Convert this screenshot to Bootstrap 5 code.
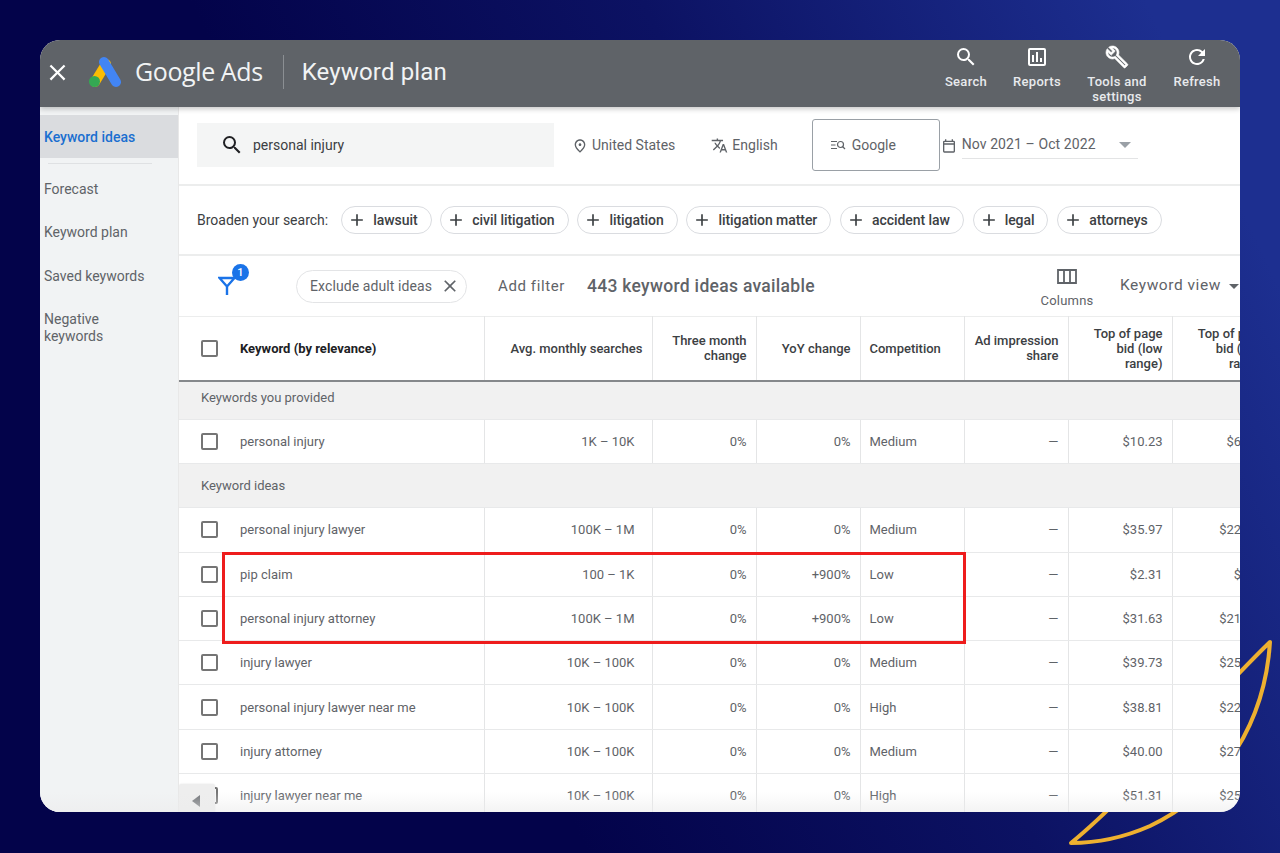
<!DOCTYPE html>
<html lang="en">
<head>
<meta charset="utf-8">
<title>Keyword plan</title>
<link rel="stylesheet" href="https://cdn.jsdelivr.net/npm/bootstrap@5.3.0/dist/css/bootstrap.min.css">
<style>
html,body{height:853px;overflow:hidden}
body{font-family:Roboto,"Liberation Sans",sans-serif;color:#5f6368;background:linear-gradient(65deg,#03034a 35%,#0c1263 62%,#1d2f90 92%);padding:40px}
.leaf{position:absolute;left:1060px;top:630px}
.frame{position:relative;width:1200px;height:772px;border-radius:20px;overflow:hidden;background:#fff}
.frame::after{content:"";position:absolute;left:0;right:0;bottom:0;height:20px;background:linear-gradient(rgba(240,240,240,0),rgba(236,236,236,.6));pointer-events:none;z-index:3}
.topbar{height:67px;background:#5f6368;color:#fff;box-shadow:0 2px 5px rgba(0,0,0,.22);position:relative;z-index:2;flex:none}
.brandwrap{margin-bottom:4px}
.close-x{margin:2px 17px 0 4px}
.brand{font-family:"Open Sans","Noto Sans",sans-serif;font-size:25px;letter-spacing:-.4px;color:#f1f3f4;margin-left:13px}
.vsep{width:1px;height:34px;background:#8b8f93;margin:0 18px 0 20px}
.pagename{font-size:24px;color:#f1f3f4;letter-spacing:.15px}
.tool{font-size:13px;line-height:15px;font-weight:500;letter-spacing:.3px;color:#e8eaed;text-align:center;width:80px;height:67px;padding-top:5px}
.tool.search{width:62px}
.tool svg{display:block;margin:0 auto 5px;height:24px}
.tool .wrench{stroke:#fff;stroke-width:.6px}
.tools-end{padding-right:3px}
.side{width:139px;flex:none;background:#f1f3f4;border-right:1.5px solid #e8e8e8;padding-top:8px;font-size:14px;line-height:17px}
.side .active-item{height:43px;background:#dadcdf;color:#1a6fd0;font-weight:500;padding:14px 0 0 4px}
.side hr{margin:5px 26px 0 8px;border:0;border-top:1px solid #dfe1e3;opacity:1}
.side a{display:block;color:#5f6368;text-decoration:none;padding-left:4px}
.side a.f{margin-top:17px}
.side a.n{margin-top:26.300px}
.main{min-width:0;flex:1;position:relative;overflow:hidden}
.searchrow{height:79px;border-bottom:2px solid #eceded;font-size:14px;padding-left:18px}
.sbox{width:357px;height:44px;background:#f4f5f5;color:#3c4043;padding-left:23px;margin-top:-1px}
.sbox span{margin-left:9px}
.loc{margin-left:18px}
.lang{margin-left:36px}
.google{width:128px;height:52px;border:1.5px solid #9aa0a6;border-radius:3px;padding-left:18px;margin:-1px 0 0 34px}
.google svg{margin-right:6px}
.date{margin-left:1px}
.date .val{width:176px;margin-left:5px;height:28px;border-bottom:1px solid #e3e4e5;letter-spacing:.1px;margin-top:-1px}
.tri{width:0;height:0;border-left:6px solid transparent;border-right:6px solid transparent;border-top:6px solid #9aa0a6}
.tri.date-tri{margin-right:7px}
.chiprow{height:70px;border-bottom:2px solid #eceded;padding-left:18px;font-size:14px;color:#3c4043}
.chiprow .lbl{margin-right:13px}
.chip{height:28px;border:1.5px solid #dadce0;border-radius:14px;font-weight:500;color:#3c4043;padding:0 13px 0 5px;margin-right:8.800px;background:#fff;letter-spacing:-.06px}
.chip svg{margin-right:6px}
.filterrow{height:60px;padding-left:39px;position:relative}
.badge-n{position:absolute;left:53px;top:8px;width:17px;height:17px;border-radius:50%;background:#1a73e8;color:#fff;font-size:11px;line-height:17px;text-align:center;font-weight:500}
.xchip{width:171px;height:33px;border:1.5px solid #e3e4e6;border-radius:17px;font-size:14px;padding-left:13px;margin:0 31px 0 60px;letter-spacing:.1px}
.xchip svg{margin-left:8px}
.addf{font-size:15px;letter-spacing:.6px;margin-right:22px}
.count{font-size:17.500px;font-weight:500;letter-spacing:.3px}
.cols{width:70px;font-size:13px;margin-left:auto;margin-right:18px;letter-spacing:.2px;padding-top:5px;line-height:15px;text-align:center}
.cols svg{display:block;margin:0 auto 9px}
.kview{font-size:15.500px;letter-spacing:.55px;width:120px;flex:none}
.kview .tri{border-top-color:#5f6368;border-left-width:5px;border-right-width:5px;border-top-width:5px;margin-left:8px}
.tbl-wrap{position:relative;overflow:hidden;width:1061px}
table.kw{table-layout:fixed;width:1097px;border-collapse:collapse;font-size:13px;margin:0;color:#5f6368}
table.kw th,table.kw td{border-right:1.5px solid #e4e5e6;border-bottom:1.5px solid #e8e9ea;padding:0 9px;text-align:right;line-height:15px;font-weight:400}
table.kw thead tr{height:64px}
table.kw thead th{border-top:1.5px solid #eceded;border-bottom:2.5px solid #85888b;color:#3c4043;font-weight:500}
table.kw tbody tr{height:44.300px}
table.kw tr.grp{height:38.500px;background:#f1f1f1}
table.kw tr.grp td{padding-bottom:6px}
table.kw tr.grp.two{height:44.500px}
table.kw tr.grp.two td{padding-bottom:0}
table.kw tr.grp td{text-align:left;padding-left:22px;border-right:0}
table.kw .k{text-align:left;padding-left:61px;position:relative}
table.kw thead .k{color:#202124;font-weight:700}
table.kw td.v{padding-right:17px}
table.kw .c{text-align:left}
.k .form-check-input{position:absolute;left:22px;top:50%;width:17px;height:17px;margin:-8.500px 0 0;border:2px solid #757575;border-radius:2px;background:#fff}
.redbox{position:absolute;left:43px;top:236px;width:744px;height:92px;border:3px solid #ee1c1c;pointer-events:none}
.scroll-left{position:absolute;left:0;bottom:0;width:36px;height:28px;background:#eeeeee;border-radius:3px 3px 0 0;box-shadow:0 0 2px rgba(0,0,0,.12);padding:11px 0 0 13px;z-index:2}
.scroll-left i{display:block;width:0;height:0;border-top:6px solid transparent;border-bottom:6px solid transparent;border-right:8px solid #6e7175}
.content{height:705px}
</style>
</head>
<body>
<svg class="leaf" width="220" height="223" viewBox="1060 630 220 223" aria-hidden="true"><path d="M1270 642C1265 720 1225 790 1150 826C1125 837 1098 843 1071 843C1130 795 1205 705 1270 642Z" fill="none" stroke="#eeb030" stroke-width="4" stroke-linejoin="round"/></svg>

<svg width="0" height="0" class="position-absolute">
 <symbol id="i-search" viewBox="0 0 24 24"><path d="M15.500 14h-.79l-.28-.27A6.471 6.471 0 0 0 16 9.500 6.500 6.500 0 1 0 9.500 16c1.610 0 3.090-.59 4.230-1.570l.27.28v.79l5 4.990L20.490 19l-4.990-5zm-6 0C7.010 14 5 11.990 5 9.500S7.010 5 9.500 5 14 7.010 14 9.500 11.990 14 9.500 14z"/></symbol>
 <symbol id="i-plus" viewBox="0 0 24 24"><path d="M19 13h-6v6h-2v-6H5v-2h6V5h2v6h6v2z"/></symbol>
 <symbol id="i-x" viewBox="0 0 24 24"><path d="M19 6.410 17.590 5 12 10.590 6.410 5 5 6.410 10.590 12 5 17.590 6.410 19 12 13.410 17.590 19 19 17.590 13.410 12z"/></symbol>
</svg>

<div class="frame d-flex flex-column">
 <header class="topbar d-flex align-items-center">
  <div class="d-flex align-items-center brandwrap">
   <svg class="close-x" width="27" height="27" fill="#fff" aria-hidden="true"><use href="#i-x"/></svg>
   <svg width="34" height="32" viewBox="0 0 34 32" aria-hidden="true"><path d="M18 8 7 26" stroke="#fbbc04" stroke-width="10" stroke-linecap="round" fill="none"/><path d="M16 6l12 20" stroke="#4285f4" stroke-width="10" stroke-linecap="round" fill="none"/><circle cx="6.500" cy="25.500" r="5.500" fill="#34a853"/></svg>
   <span class="brand">Google Ads</span>
   <span class="vsep"></span>
   <span class="pagename">Keyword plan</span>
  </div>
  <nav class="d-flex ms-auto tools-end">
   <div class="tool search"><svg width="24" height="24" fill="#fff" aria-hidden="true"><use href="#i-search"/></svg>Search</div>
   <div class="tool"><svg width="24" height="24" viewBox="0 0 24 24" fill="#fff" aria-hidden="true"><path d="M19 3H5a2 2 0 0 0-2 2v14a2 2 0 0 0 2 2h14a2 2 0 0 0 2-2V5a2 2 0 0 0-2-2zm0 16H5V5h14v14zM7 10h2v7H7zm4-3h2v10h-2zm4 6h2v4h-2z"/></svg>Reports</div>
   <div class="tool"><svg class="wrench" width="24" height="24" viewBox="0 0 24 24" fill="#fff" aria-hidden="true"><path d="M22.610 18.990l-9.080-9.080c.93-2.340.45-5.100-1.440-7C9.790.61 6.210.4 3.660 2.250L7.500 6.100 6.080 7.510 2.250 3.690C.39 6.230.6 9.820 2.900 12.110c1.860 1.860 4.570 2.350 6.880 1.480l9.110 9.110c.39.39 1.020.39 1.410 0l2.300-2.300c.4-.38.4-1.010.01-1.410zm-3 1.600l-9.460-9.460c-.61.45-1.290.72-2 .82-1.360.2-2.790-.21-3.830-1.250C3.370 9.760 2.930 8.500 3 7.260l3.090 3.090 4.240-4.240-3.090-3.090c1.240-.07 2.490.37 3.440 1.310 1.080 1.080 1.490 2.570 1.240 3.960-.12.71-.42 1.370-.88 1.960l9.450 9.450-.88.89z"/></svg>Tools and settings</div>
   <div class="tool"><svg width="24" height="24" viewBox="0 0 24 24" fill="#fff" aria-hidden="true"><path d="M17.650 6.350A7.958 7.958 0 0 0 12 4c-4.420 0-7.990 3.580-7.990 8s3.570 8 7.990 8c3.730 0 6.840-2.550 7.730-6h-2.080A5.990 5.990 0 0 1 12 18c-3.310 0-6-2.690-6-6s2.690-6 6-6c1.660 0 3.140.69 4.220 1.780L13 11h7V4l-2.350 2.350z"/></svg>Refresh</div>
  </nav>
 </header>
 <div class="d-flex content">
  <aside class="side">
   <div class="active-item">Keyword ideas</div>
   <hr>
   <a class="f" href="#">Forecast</a>
   <a class="n" href="#">Keyword plan</a>
   <a class="n" href="#">Saved keywords</a>
   <a class="n" href="#">Negative<br>keywords</a>
  </aside>
  <main class="main">
   <div class="searchrow d-flex align-items-center">
    <div class="sbox d-flex align-items-center"><svg width="24" height="24" fill="#202124" aria-hidden="true"><use href="#i-search"/></svg><span>personal injury</span></div>
    <div class="loc d-flex align-items-center"><svg width="16" height="16" viewBox="0 0 24 24" fill="#5f6368" class="me-1" aria-hidden="true"><path d="M12 12c-1.100 0-2-.9-2-2s.9-2 2-2 2 .9 2 2-.9 2-2 2zm6-1.800C18 6.570 15.350 4 12 4s-6 2.570-6 6.200c0 2.340 1.950 5.440 6 9.140 4.050-3.700 6-6.800 6-9.140zM12 2c4.200 0 8 3.220 8 8.200 0 3.320-2.670 7.250-8 11.800-5.330-4.550-8-8.480-8-11.800C4 5.220 7.800 2 12 2z"/></svg>United States</div>
    <div class="d-flex align-items-center lang"><svg width="17" height="17" viewBox="0 0 24 24" fill="#5f6368" class="me-1" aria-hidden="true"><path d="M12.870 15.070l-2.540-2.510.03-.03c1.740-1.940 2.980-4.170 3.710-6.530H17V4h-7V2H8v2H1v1.990h11.170C11.500 7.920 10.440 9.750 9 11.350 8.070 10.320 7.300 9.190 6.690 8h-2c.73 1.630 1.730 3.170 2.980 4.560l-5.090 5.020L4 19l5-5 3.110 3.110.76-2.040zM18.500 10h-2L12 22h2l1.120-3h4.750L21 22h2l-4.500-12zm-2.620 7l1.620-4.330L19.120 17h-3.240z"/></svg>English</div>
    <div class="google d-flex align-items-center"><svg width="15" height="10" viewBox="0 0 15 10" fill="none" stroke="#5f6368" stroke-width="1.200" aria-hidden="true"><path d="M0 1.500h6M0 5h4.500M0 8.500h6"/><circle cx="9.500" cy="4.500" r="3"/><path d="m11.500 6.500 2.500 2.500"/></svg>Google</div>
    <div class="date d-flex align-items-center"><svg width="16" height="16" viewBox="0 0 24 24" fill="#5f6368" aria-hidden="true"><path d="M19 4h-1V2h-2v2H8V2H6v2H5a2 2 0 0 0-2 2v14a2 2 0 0 0 2 2h14a2 2 0 0 0 2-2V6a2 2 0 0 0-2-2zm0 16H5V10h14v10zm0-12H5V6h14v2z"/></svg><div class="val d-flex justify-content-between align-items-center"><span>Nov 2021 – Oct 2022</span><span class="tri date-tri"></span></div></div>
   </div>
   <div class="chiprow d-flex align-items-center">
    <span class="lbl">Broaden your search:</span>
    <span class="chip d-flex align-items-center"><svg width="20" height="20" fill="#3c4043" aria-hidden="true"><use href="#i-plus"/></svg>lawsuit</span>
    <span class="chip d-flex align-items-center"><svg width="20" height="20" fill="#3c4043" aria-hidden="true"><use href="#i-plus"/></svg>civil litigation</span>
    <span class="chip d-flex align-items-center"><svg width="20" height="20" fill="#3c4043" aria-hidden="true"><use href="#i-plus"/></svg>litigation</span>
    <span class="chip d-flex align-items-center"><svg width="20" height="20" fill="#3c4043" aria-hidden="true"><use href="#i-plus"/></svg>litigation matter</span>
    <span class="chip d-flex align-items-center"><svg width="20" height="20" fill="#3c4043" aria-hidden="true"><use href="#i-plus"/></svg>accident law</span>
    <span class="chip d-flex align-items-center"><svg width="20" height="20" fill="#3c4043" aria-hidden="true"><use href="#i-plus"/></svg>legal</span>
    <span class="chip d-flex align-items-center"><svg width="20" height="20" fill="#3c4043" aria-hidden="true"><use href="#i-plus"/></svg>attorneys</span>
   </div>
   <div class="filterrow d-flex align-items-center">
    <svg width="18" height="20" viewBox="0 0 18 20" fill="none" stroke="#1a73e8" stroke-width="2.400" aria-hidden="true"><path d="M1.500 2h15L9 10.500zM9 9v10"/></svg>
    <span class="badge-n">1</span>
    <div class="xchip d-flex align-items-center">Exclude adult ideas<svg width="20" height="20" fill="#5f6368" aria-hidden="true"><use href="#i-x"/></svg></div>
    <span class="addf">Add filter</span>
    <span class="count">443 keyword ideas available</span>
    <div class="cols"><svg width="20" height="15" viewBox="0 0 20 15" fill="none" stroke="#5f6368" stroke-width="1.800" aria-hidden="true"><path d="M1 1h18v13H1zM7 1v13M13 1v13"/></svg>Columns</div>
    <div class="kview d-flex align-items-center">Keyword view<span class="tri"></span></div>
   </div>
   <div class="tbl-wrap">
    <table class="kw">
     <colgroup><col style="width:305px"><col style="width:168px"><col style="width:104px"><col style="width:104px"><col style="width:104px"><col style="width:104px"><col style="width:104px"><col style="width:104px"></colgroup>
     <thead><tr><th class="k"><input class="form-check-input" type="checkbox" aria-label="Select all">Keyword (by relevance)</th><th>Avg. monthly searches</th><th>Three month change</th><th>YoY change</th><th class="c">Competition</th><th>Ad impression share</th><th>Top of page bid (low range)</th><th>Top of page bid (high range)</th></tr></thead>
     <tbody>
      <tr class="grp"><td colspan="8">Keywords you provided</td></tr>
      <tr><td class="k"><input class="form-check-input" type="checkbox" aria-label="Select">personal injury</td><td class="v">1K – 10K</td><td>0%</td><td>0%</td><td class="c">Medium</td><td>—</td><td>$10.23</td><td>$66.20</td></tr>
      <tr class="grp two"><td colspan="8">Keyword ideas</td></tr>
      <tr><td class="k"><input class="form-check-input" type="checkbox" aria-label="Select">personal injury lawyer</td><td class="v">100K – 1M</td><td>0%</td><td>0%</td><td class="c">Medium</td><td>—</td><td>$35.97</td><td>$225.01</td></tr>
      <tr><td class="k"><input class="form-check-input" type="checkbox" aria-label="Select">pip claim</td><td class="v">100 – 1K</td><td>0%</td><td>+900%</td><td class="c">Low</td><td>—</td><td>$2.31</td><td>$7.50</td></tr>
      <tr><td class="k"><input class="form-check-input" type="checkbox" aria-label="Select">personal injury attorney</td><td class="v">100K – 1M</td><td>0%</td><td>+900%</td><td class="c">Low</td><td>—</td><td>$31.63</td><td>$214.10</td></tr>
      <tr><td class="k"><input class="form-check-input" type="checkbox" aria-label="Select">injury lawyer</td><td class="v">10K – 100K</td><td>0%</td><td>0%</td><td class="c">Medium</td><td>—</td><td>$39.73</td><td>$251.40</td></tr>
      <tr><td class="k"><input class="form-check-input" type="checkbox" aria-label="Select">personal injury lawyer near me</td><td class="v">10K – 100K</td><td>0%</td><td>0%</td><td class="c">High</td><td>—</td><td>$38.81</td><td>$225.30</td></tr>
      <tr><td class="k"><input class="form-check-input" type="checkbox" aria-label="Select">injury attorney</td><td class="v">10K – 100K</td><td>0%</td><td>0%</td><td class="c">Medium</td><td>—</td><td>$40.00</td><td>$271.20</td></tr>
      <tr><td class="k"><input class="form-check-input" type="checkbox" aria-label="Select">injury lawyer near me</td><td class="v">10K – 100K</td><td>0%</td><td>0%</td><td class="c">High</td><td>—</td><td>$51.31</td><td>$253.70</td></tr>
     </tbody>
    </table>
    <div class="redbox"></div>
   </div>
   <div class="scroll-left"><i></i></div>
  </main>
 </div>
</div>
</body>
</html>
